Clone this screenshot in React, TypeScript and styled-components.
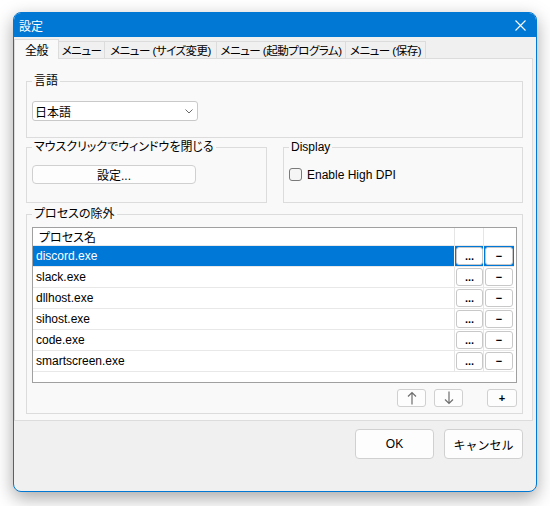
import React from 'react';
import styled, { createGlobalStyle } from 'styled-components';

const GlobalStyle = createGlobalStyle`
  html, body {
    margin: 0;
    padding: 0;
    background: #ffffff;
  }
  body {
    font-family: "Liberation Sans", "Noto Sans CJK JP", sans-serif;
    font-size: 12px;
    color: #000;
    font-feature-settings: "palt" 1;
  }
  * {
    box-sizing: border-box;
  }
`;

const Page = styled.div`
  padding: 12px 0 0 13px;
  height: 506px;
`;

const Window = styled.div`
  width: 524px;
  height: 480px;
  display: flex;
  flex-direction: column;
  border: 1px solid #0078d4;
  border-radius: 8px;
  overflow: hidden;
  background: #f0f0f0;
  box-shadow: 0 6px 18px rgba(0, 0, 0, 0.35);
`;

const TitleBar = styled.div`
  height: 24px;
  flex: none;
  display: flex;
  align-items: center;
  justify-content: space-between;
  padding: 0 10px 0 5px;
  background: #0078d4;
  color: #ffffff;
  font-size: 12px;
`;

const TabStrip = styled.div`
  height: 21px;
  flex: none;
  display: flex;
  align-items: flex-end;
`;

const Tab = styled.div<{ $active?: boolean; $w: number }>`
  width: ${(p) => p.$w}px;
  height: ${(p) => (p.$active ? 20 : 17)}px;
  margin-bottom: ${(p) => (p.$active ? -1 : 0)}px;
  margin-right: -1px;
  position: relative;
  z-index: ${(p) => (p.$active ? 1 : 0)};
  display: flex;
  align-items: center;
  justify-content: center;
  background: ${(p) => (p.$active ? '#f9f9f9' : '#f0f0f0')};
  border: 1px solid #dcdcdc;
  border-bottom: none;
  white-space: nowrap;
  overflow: hidden;
  font-size: ${(p) => (p.$active ? 12 : 11.5)}px;
  letter-spacing: -0.5px;
`;

const Panel = styled.div`
  height: 363px;
  flex: none;
  margin-right: 3px;
  display: flex;
  flex-direction: column;
  padding: 15px 9px 6px 11px;
  background: #f9f9f9;
  border: 1px solid #dcdcdc;
`;

const Group = styled.fieldset<{ $pt: number; $pb: number; $gapTop?: number; $w?: number }>`
  margin: ${(p) => p.$gapTop ?? 0}px 0 0 0;
  min-width: 0;
  ${(p) => (p.$w ? `width: ${p.$w}px;` : '')}
  border: 1px solid #dcdcdc;
  padding: ${(p) => p.$pt}px 5px ${(p) => p.$pb}px 5px;
`;

const Legend = styled.legend`
  padding: 0 2px;
  line-height: 14px;
  font-size: 12px;
`;

const GroupRow = styled.div`
  display: flex;
  gap: 16px;
  margin-top: 2px;
`;

const SelectBox = styled.div`
  width: 166px;
  height: 20px;
  display: flex;
  align-items: center;
  justify-content: space-between;
  padding: 0 4px 0 2px;
  background: #ffffff;
  border: 1px solid #c9c9c9;
  border-radius: 3px;
`;

const PlainButton = styled.button<{ $w: number; $h: number }>`
  width: ${(p) => p.$w}px;
  height: ${(p) => p.$h}px;
  padding: 0;
  display: flex;
  align-items: center;
  justify-content: center;
  font-family: inherit;
  font-size: 12px;
  color: #000;
  background: #fdfdfd;
  border: 1px solid #d0d0d0;
  border-radius: 4px;
`;

const CheckRow = styled.label`
  height: 19px;
  display: flex;
  align-items: center;
  gap: 5px;
`;

const CheckBox = styled.span`
  width: 13px;
  height: 13px;
  background: #f5f5f5;
  border: 1px solid #7a7a7a;
  border-radius: 3px;
`;

const ListBox = styled.div`
  height: 156px;
  display: grid;
  grid-template-columns: 422px 29px 30px;
  grid-template-rows: 18px repeat(6, 21px);
  align-content: start;
  background: #ffffff;
  border: 1px solid #a0a0a0;
`;

const Cell = styled.div<{ $sel?: boolean; $pad?: number; $last?: boolean }>`
  display: flex;
  align-items: ${(p) => (p.$pad === undefined ? 'flex-start' : 'center')};
  padding: ${(p) => (p.$pad === undefined ? '1px 0 0 1px' : `0 0 0 ${p.$pad}px`)};
  background: ${(p) => (p.$sel ? '#0078d7' : 'transparent')};
  color: ${(p) => (p.$sel ? '#ffffff' : '#000000')};
  border-bottom: 1px solid #e8e8e8;
  border-right: ${(p) => (p.$last ? 'none' : `1px solid ${p.$sel ? '#ffffff' : '#e5e5e5'}`)};
  white-space: nowrap;
`;

const CellButton = styled.button<{ $w: number }>`
  width: ${(p) => p.$w}px;
  height: 18px;
  padding: 0;
  display: flex;
  align-items: center;
  justify-content: center;
  font-family: "Liberation Sans", sans-serif;
  font-size: 11px;
  font-weight: bold;
  color: #000;
  background: #ffffff;
  border: 1px solid #c8c8c8;
  border-radius: 3px;
`;

const MoveRow = styled.div`
  height: 18px;
  margin-top: 6px;
  display: flex;
  justify-content: flex-end;
  gap: 8px;
`;

const MoveButton = styled(PlainButton)<{ $gapLeft?: number }>`
  border-radius: 3px;
  margin-left: ${(p) => p.$gapLeft ?? 0}px;
  font-family: "Liberation Sans", sans-serif;
  font-weight: bold;
  font-size: 11px;
`;

const Footer = styled.div`
  flex: 1;
  display: flex;
  justify-content: flex-end;
  align-items: flex-start;
  gap: 10px;
  padding: 8px 13px 0 0;
`;

const CloseIcon = () => (
  <svg width="11" height="11" viewBox="0 0 11 11">
    <path d="M0.5 0.5 L10.5 10.5 M10.5 0.5 L0.5 10.5" stroke="#ffffff" strokeWidth="1.1" />
  </svg>
);

const Chevron = () => (
  <svg width="8" height="5" viewBox="0 0 8 5">
    <polyline points="0.5,0.5 4,4 7.5,0.5" fill="none" stroke="#6a6a6a" strokeWidth="1" />
  </svg>
);

const Arrow = ({ down }: { down?: boolean }) => (
  <svg width="10" height="14" viewBox="0 0 10 14" style={down ? { transform: 'rotate(180deg)' } : undefined}>
    <path d="M5 1.5 V13.5 M1 5.5 L5 1.5 L9 5.5" fill="none" stroke="#6e6e6e" strokeWidth="1.2" />
  </svg>
);

const tabs = [
  { label: '全般', w: 45 },
  { label: 'メニュー', w: 47 },
  { label: 'メニュー (サイズ変更)', w: 113 },
  { label: 'メニュー (起動プログラム)', w: 130 },
  { label: 'メニュー (保存)', w: 81 },
];

const processes = ['discord.exe', 'slack.exe', 'dllhost.exe', 'sihost.exe', 'code.exe', 'smartscreen.exe'];

export default function App() {
  return (
    <>
      <GlobalStyle />
      <Page>
        <Window>
          <TitleBar>
            <span>設定</span>
            <CloseIcon />
          </TitleBar>

          <TabStrip>
            {tabs.map((t, i) => (
              <Tab key={t.label} $w={t.w} $active={i === 0}>
                {t.label}
              </Tab>
            ))}
          </TabStrip>

          <Panel>
            <Group $pt={13} $pb={16}>
              <Legend>言語</Legend>
              <SelectBox>
                <span>日本語</span>
                <Chevron />
              </SelectBox>
            </Group>

            <GroupRow>
              <Group $pt={11} $pb={18} $w={241}>
                <Legend>マウスクリックでウィンドウを閉じる</Legend>
                <PlainButton $w={164} $h={19}>設定...</PlainButton>
              </Group>
              <Group $pt={11} $pb={18} $w={240}>
                <Legend>Display</Legend>
                <CheckRow>
                  <CheckBox />
                  <span>Enable High DPI</span>
                </CheckRow>
              </Group>
            </GroupRow>

            <Group $pt={6} $pb={6} $gapTop={4}>
              <Legend>プロセスの除外</Legend>
              <ListBox>
                <Cell $pad={6}>プロセス名</Cell>
                <Cell $pad={0} />
                <Cell $pad={0} $last />
                {processes.map((name, i) => (
                  <React.Fragment key={name}>
                    <Cell $pad={3} $sel={i === 0}>{name}</Cell>
                    <Cell $sel={i === 0}>
                      <CellButton $w={27}>...</CellButton>
                    </Cell>
                    <Cell $sel={i === 0} $last>
                      <CellButton $w={28}>−</CellButton>
                    </Cell>
                  </React.Fragment>
                ))}
              </ListBox>
              <MoveRow>
                <MoveButton $w={29} $h={18}>
                  <Arrow />
                </MoveButton>
                <MoveButton $w={29} $h={18}>
                  <Arrow down />
                </MoveButton>
                <MoveButton $w={30} $h={18} $gapLeft={16}>+</MoveButton>
              </MoveRow>
            </Group>
          </Panel>

          <Footer>
            <PlainButton $w={79} $h={30}>OK</PlainButton>
            <PlainButton $w={79} $h={30}>キャンセル</PlainButton>
          </Footer>
        </Window>
      </Page>
    </>
  );
}
